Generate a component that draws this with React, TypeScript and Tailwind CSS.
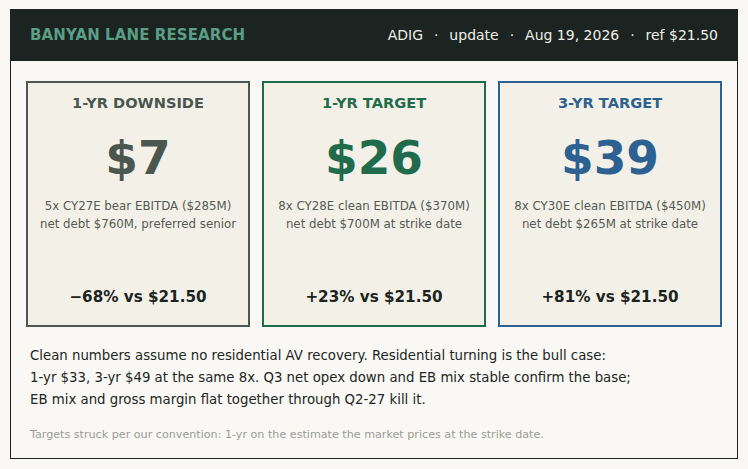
const FONT = "font-['DejaVu_Sans','Verdana',sans-serif]"

type Target = {
  label: string
  price: string
  lines: string[]
  delta: string
  border: string
  color: string
}

const TARGETS: Target[] = [
  {
    label: "1-YR DOWNSIDE",
    price: "$7",
    lines: ["5x CY27E bear EBITDA ($285M)", "net debt $760M, preferred senior"],
    delta: "\u221268% vs $21.50",
    border: "border-[#4d5750]",
    color: "text-[#4b5650]",
  },
  {
    label: "1-YR TARGET",
    price: "$26",
    lines: ["8x CY28E clean EBITDA ($370M)", "net debt $700M at strike date"],
    delta: "+23% vs $21.50",
    border: "border-[#1f6b4b]",
    color: "text-[#1f6b4b]",
  },
  {
    label: "3-YR TARGET",
    price: "$39",
    lines: ["8x CY30E clean EBITDA ($450M)", "net debt $265M at strike date"],
    delta: "+81% vs $21.50",
    border: "border-[#2d6191]",
    color: "text-[#2d6191]",
  },
]

function TargetCard({ t }: { t: Target }) {
  return (
    <div className={`flex h-[246px] flex-col items-center border-2 ${t.border} bg-[#f3f1e7] pt-[10px] pb-[18px] text-center`}>
      <div className={`text-[14.6px] font-bold leading-[20px] ${t.color}`}>{t.label}</div>
      <div className={`mt-[19px] text-[47px] font-bold leading-[52px] ${t.color}`}>{t.price}</div>
      <div className="mt-[13px] text-[11.8px] leading-[18px] text-[#545a55]">
        {t.lines.map((l) => (
          <div key={l}>{l}</div>
        ))}
      </div>
      <div className="mt-auto text-[15.2px] font-bold leading-[20px] text-[#1b2420]">{t.delta}</div>
    </div>
  )
}

export default function App() {
  return (
    <div className={`min-h-screen bg-[#f9f8f4] px-[10px] pt-[9px] pb-[10px] ${FONT}`}>
      <div className="border border-[#1b2420]">
        <div className="flex h-[51px] items-center justify-between bg-[#1b2420] px-[19px]">
          <div className="text-[15px] font-bold tracking-[0.1px] text-[#5a9e85]">BANYAN LANE RESEARCH</div>
          <div className="text-[14px] text-[#f0eee6]">
            ADIG <span className="mx-[6.5px]">·</span> update <span className="mx-[6.5px]">·</span> Aug 19, 2026{" "}
            <span className="mx-[6.5px]">·</span> ref $21.50
          </div>
        </div>
        <div className="px-[15px] pt-[20px] pb-[15px]">
          <div className="grid grid-cols-3 gap-[12px]">
            {TARGETS.map((t) => (
              <TargetCard key={t.label} t={t} />
            ))}
          </div>
          <p className="mt-[18px] px-[4px] text-[13.3px] leading-[22px] text-[#222623]">
            Clean numbers assume no residential AV recovery. Residential turning is the bull case:
            <br />
            1-yr $33, 3-yr $49 at the same 8x. Q3 net opex down and EB mix stable confirm the base;
            <br />
            EB mix and gross margin flat together through Q2-27 kill it.
          </p>
          <p className="mt-[16px] px-[4px] text-[11.15px] leading-[16px] text-[#9a9c98]">
            Targets struck per our convention: 1-yr on the estimate the market prices at the strike date.
          </p>
        </div>
      </div>
    </div>
  )
}
